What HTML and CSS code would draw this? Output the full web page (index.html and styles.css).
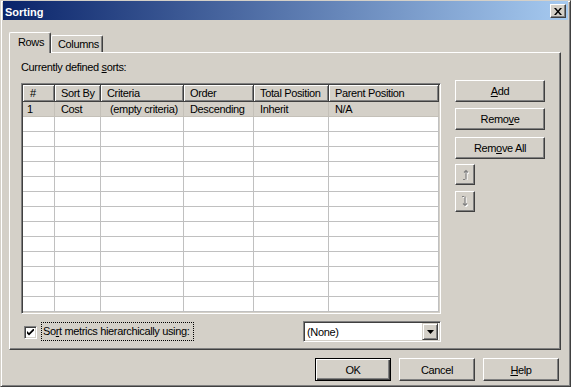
FILE: index.html
```html
<!DOCTYPE html>
<html lang="en">
<head>
  <meta charset="UTF-8" />
  <title>Sorting</title>
  <link rel="stylesheet" href="styles.css">
</head>
<body>

  <div class="window">

    <div class="titlebar">
      <span class="title">Sorting</span>
      <span class="close-btn">
        <svg width="8" height="7" viewBox="0 0 8 7"><path d="M0 0h2l2 2.5L6 0h2L5 3.5 8 7H6L4 4.5 2 7H0l3-3.5z" fill="#000"/></svg>
      </span>
    </div>

    <div class="dialog">

      <div class="tabs">
        <div class="tab active">Rows</div>
        <div class="tab">Columns</div>
      </div>

      <div class="panel">
        <div class="panel-left">
          <div class="caption">Currently defined <u>s</u>orts:</div>

          <div class="grid">
            <div class="grid-head">
              <div class="hcell c1">#</div>
              <div class="hcell c2">Sort By</div>
              <div class="hcell c3">Criteria</div>
              <div class="hcell c4">Order</div>
              <div class="hcell c5">Total Position</div>
              <div class="hcell c6">Parent Position</div>
            </div>
            <div class="grid-row selected">
              <div class="cell c1">1</div>
              <div class="cell c2">Cost</div>
              <div class="cell c3 crit">(empty criteria)</div>
              <div class="cell c4">Descending</div>
              <div class="cell c5">Inherit</div>
              <div class="cell c6">N/A</div>
            </div>
            <div class="grid-row"><div class="cell c1"></div><div class="cell c2"></div><div class="cell c3"></div><div class="cell c4"></div><div class="cell c5"></div><div class="cell c6"></div></div>
            <div class="grid-row"><div class="cell c1"></div><div class="cell c2"></div><div class="cell c3"></div><div class="cell c4"></div><div class="cell c5"></div><div class="cell c6"></div></div>
            <div class="grid-row"><div class="cell c1"></div><div class="cell c2"></div><div class="cell c3"></div><div class="cell c4"></div><div class="cell c5"></div><div class="cell c6"></div></div>
            <div class="grid-row"><div class="cell c1"></div><div class="cell c2"></div><div class="cell c3"></div><div class="cell c4"></div><div class="cell c5"></div><div class="cell c6"></div></div>
            <div class="grid-row"><div class="cell c1"></div><div class="cell c2"></div><div class="cell c3"></div><div class="cell c4"></div><div class="cell c5"></div><div class="cell c6"></div></div>
            <div class="grid-row"><div class="cell c1"></div><div class="cell c2"></div><div class="cell c3"></div><div class="cell c4"></div><div class="cell c5"></div><div class="cell c6"></div></div>
            <div class="grid-row"><div class="cell c1"></div><div class="cell c2"></div><div class="cell c3"></div><div class="cell c4"></div><div class="cell c5"></div><div class="cell c6"></div></div>
            <div class="grid-row"><div class="cell c1"></div><div class="cell c2"></div><div class="cell c3"></div><div class="cell c4"></div><div class="cell c5"></div><div class="cell c6"></div></div>
            <div class="grid-row"><div class="cell c1"></div><div class="cell c2"></div><div class="cell c3"></div><div class="cell c4"></div><div class="cell c5"></div><div class="cell c6"></div></div>
            <div class="grid-row"><div class="cell c1"></div><div class="cell c2"></div><div class="cell c3"></div><div class="cell c4"></div><div class="cell c5"></div><div class="cell c6"></div></div>
            <div class="grid-row"><div class="cell c1"></div><div class="cell c2"></div><div class="cell c3"></div><div class="cell c4"></div><div class="cell c5"></div><div class="cell c6"></div></div>
            <div class="grid-row"><div class="cell c1"></div><div class="cell c2"></div><div class="cell c3"></div><div class="cell c4"></div><div class="cell c5"></div><div class="cell c6"></div></div>
            <div class="grid-row"><div class="cell c1"></div><div class="cell c2"></div><div class="cell c3"></div><div class="cell c4"></div><div class="cell c5"></div><div class="cell c6"></div></div>
          </div>

          <div class="options">
            <span class="checkbox">
              <svg width="7" height="7" viewBox="0 0 7 7"><path d="M0 2l2 2 5-5v2.5L2 6.5 0 4.5z" fill="#000"/></svg>
            </span>
            <span class="check-label">So<u>r</u>t metrics hierarchically using:</span>
            <div class="combo">
              <span class="combo-text">(None)</span>
              <span class="combo-btn">
                <svg width="7" height="4" viewBox="0 0 7 4"><path d="M0 0h7L3.5 4z" fill="#000"/></svg>
              </span>
            </div>
          </div>
        </div>

        <div class="side">
          <div class="btn wide"><u>A</u>dd</div>
          <div class="btn wide">Remo<u>v</u>e</div>
          <div class="btn wide gap">Rem<u>o</u>ve All</div>
          <div class="btn arrow">
            <svg width="8" height="11" viewBox="0 0 8 11">
              <path d="M5 1.5v9M4 10.5H2M3 3.5l2-2 2 2" stroke="#fff" stroke-width="1.2" fill="none" transform="translate(1 1)"/>
              <path d="M5 1.5v9M4 10.5H2M3 3.5l2-2 2 2" stroke="#808080" stroke-width="1.2" fill="none"/>
            </svg>
          </div>
          <div class="btn arrow">
            <svg width="8" height="11" viewBox="0 0 8 11">
              <path d="M4 0.5v9M3 0.5H1M2 7.5l2 2 2-2" stroke="#fff" stroke-width="1.2" fill="none" transform="translate(1 1)"/>
              <path d="M4 0.5v9M3 0.5H1M2 7.5l2 2 2-2" stroke="#808080" stroke-width="1.2" fill="none"/>
            </svg>
          </div>
        </div>
      </div>

      <div class="footer">
        <div class="btn default">OK</div>
        <div class="btn">Cancel</div>
        <div class="btn"><u>H</u>elp</div>
      </div>

    </div>
  </div>

</body>
</html>
```

FILE: styles.css
```css
:root {
  --face: #d4d0c8;
  --light: #ffffff;
  --shadow: #808080;
  --dark: #404040;
  --gridline: #c0c0c0;
}

body {
  margin: 0;
  background: var(--face);
  font-family: "Liberation Sans", Arial, sans-serif;
  font-size: 11px;
  letter-spacing: -0.35px;
  color: #000;
}

u {
  text-decoration: underline;
  text-underline-offset: 1px;
}

.window {
  width: 571px;
  height: 387px;
  box-sizing: border-box;
  border: 1px solid;
  border-color: var(--face) var(--dark) var(--dark) var(--face);
  box-shadow: inset 1px 1px var(--light), inset -1px -1px var(--shadow);
  padding: 0 2px 2px 2px;
  background: var(--face);
}

/* title bar */
.titlebar {
  height: 19px;
  display: flex;
  align-items: center;
  justify-content: space-between;
  padding: 0 2px 0 2px;
  background: linear-gradient(to right, #0a246a, #a6caf0);
}

.title {
  color: #fff;
  font-weight: bold;
  letter-spacing: 0;
  padding-top: 2px;
}

.close-btn {
  width: 16px;
  height: 14px;
  box-sizing: border-box;
  display: flex;
  align-items: center;
  justify-content: center;
  background: var(--face);
  border: 1px solid;
  border-color: var(--light) var(--dark) var(--dark) var(--light);
  box-shadow: inset -1px -1px var(--shadow);
  margin-top: 1px;
}

/* tabs */
.dialog {
  padding-top: 12px;
}

.tabs {
  display: flex;
  align-items: flex-end;
  height: 20px;
  margin-left: 6px;
}

.tab {
  background: var(--face);
  border: 1px solid;
  border-bottom: none;
  border-color: var(--light) var(--dark) var(--dark) var(--light);
  box-shadow: inset -1px 0 var(--shadow);
  border-radius: 2px 2px 0 0;
  box-sizing: border-box;
  height: 17px;
  padding: 2px 6px 0 6px;
  width: 52px;
}

.tab.active {
  width: 42px;
  height: 21px;
  margin-bottom: -1px;
  padding: 3px 0 0 8px;
  position: relative;
  z-index: 1;
}

.panel {
  display: flex;
  height: 298px;
  box-sizing: border-box;
  margin: 0 7px 0 6px;
  border: 1px solid;
  border-color: var(--light) var(--dark) var(--dark) var(--light);
  box-shadow: inset -1px -1px var(--shadow);
}

.panel-left {
  padding-left: 11px;
  width: 420px;
}

.caption {
  margin-top: 8px;
  line-height: 13px;
}

/* list grid */
.grid {
  margin-top: 9px;
  width: 420px;
  height: 231px;
  box-sizing: border-box;
  border: 1px solid;
  border-color: var(--shadow) var(--light) var(--light) var(--shadow);
  box-shadow: inset 1px 1px var(--dark), inset -1px -1px var(--face);
  padding: 1px;
  background: #fff;
  overflow: hidden;
}

.grid-head,
.grid-row {
  display: flex;
}

.hcell {
  height: 17px;
  box-sizing: border-box;
  background: var(--face);
  border-right: 1px solid var(--dark);
  border-bottom: 1px solid var(--dark);
  box-shadow: inset 1px 1px var(--light), inset -1px -1px var(--shadow);
  padding: 2px 0 0 6px;
  white-space: nowrap;
  overflow: hidden;
}

.hcell.c1 {
  padding-left: 7px;
}

.cell {
  height: 15px;
  box-sizing: border-box;
  border-right: 1px solid var(--gridline);
  border-bottom: 1px solid var(--gridline);
  padding: 1px 0 0 6px;
  white-space: nowrap;
  overflow: hidden;
}

.cell.c1 {
  padding-left: 4px;
}

.cell.crit {
  padding-left: 9px;
}

.grid-row.selected {
  background: var(--face);
}

.grid-row.selected .cell {
  border-color: #c4c0b8;
}

.c1 { width: 32px; }
.c2 { width: 46px; }
.c3 { width: 83px; }
.c4 { width: 70px; }
.c5 { width: 75px; }
.c6 { width: 110px; }

/* bottom options row */
.options {
  display: flex;
  align-items: center;
  margin-top: 7px;
  height: 21px;
  padding-left: 3px;
}

.checkbox {
  width: 13px;
  height: 13px;
  box-sizing: border-box;
  display: flex;
  align-items: center;
  justify-content: center;
  background: #fff;
  border: 1px solid;
  border-color: var(--shadow) var(--light) var(--light) var(--shadow);
  box-shadow: inset 1px 1px var(--dark), inset -1px -1px var(--face);
  margin-top: 2px;
}

.check-label {
  margin-left: 4px;
  height: 19px;
  box-sizing: border-box;
  border: 1px dotted #000;
  padding: 2px 1px 0 1px;
  width: 153px;
  white-space: nowrap;
}

.combo {
  margin-left: auto;
  width: 138px;
  height: 21px;
  box-sizing: border-box;
  display: flex;
  align-items: center;
  justify-content: space-between;
  background: #fff;
  border: 1px solid;
  border-color: var(--shadow) var(--light) var(--light) var(--shadow);
  box-shadow: inset 1px 1px var(--dark), inset -1px -1px var(--face);
  padding: 2px;
}

.combo-text {
  padding-left: 1px;
}

.combo-btn {
  width: 16px;
  height: 17px;
  box-sizing: border-box;
  display: flex;
  align-items: center;
  justify-content: center;
  background: var(--face);
  border: 1px solid;
  border-color: var(--face) var(--dark) var(--dark) var(--face);
  box-shadow: inset 1px 1px var(--light), inset -1px -1px var(--shadow);
}

/* buttons */
.side {
  margin-left: 14px;
  padding-top: 27px;
  display: flex;
  flex-direction: column;
  gap: 6px;
}

.btn {
  box-sizing: border-box;
  display: flex;
  align-items: center;
  justify-content: center;
  background: var(--face);
  border: 1px solid;
  border-color: var(--light) var(--dark) var(--dark) var(--light);
  box-shadow: inset -1px -1px var(--shadow);
}

.btn.wide {
  width: 90px;
  height: 22px;
}

.btn.gap {
  margin-top: 1px;
  margin-bottom: -1px;
}

.btn.arrow {
  width: 20px;
  height: 21px;
}

.btn.arrow + .btn.arrow {
  margin-top: 0;
}

.footer {
  display: flex;
  justify-content: flex-end;
  gap: 8px;
  margin-top: 8px;
  padding-right: 9px;
}

.footer .btn {
  width: 76px;
  height: 23px;
}

.footer .btn.default {
  border-color: #000;
  box-shadow: inset 1px 1px var(--light), inset -1px -1px var(--dark), inset -2px -2px var(--shadow);
}
```
